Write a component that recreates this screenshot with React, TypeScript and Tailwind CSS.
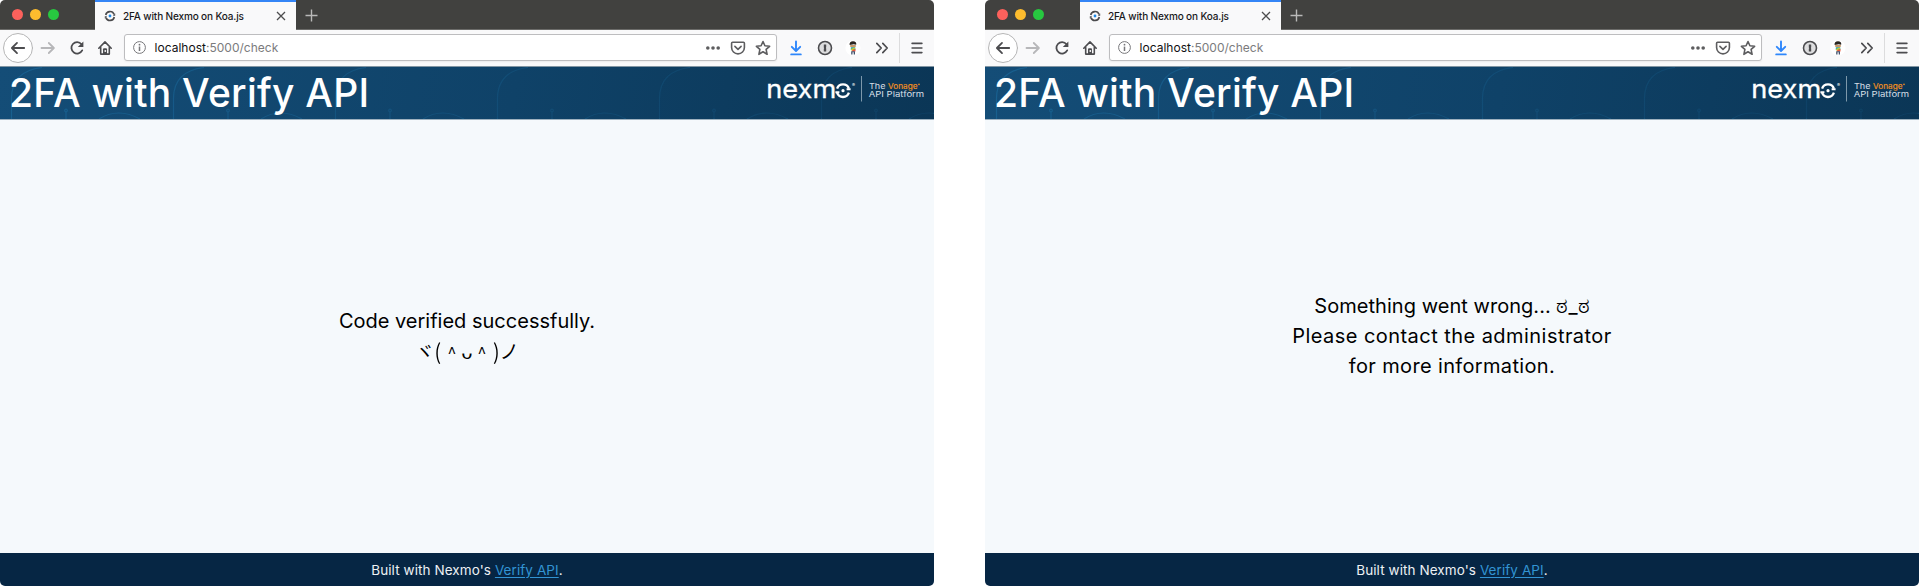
import React from "react";

const ui = "font-['Inter','Liberation_Sans',sans-serif]";

function SwirlIcon() {
  return (
    <svg className="block h-3 w-3" viewBox="0 0 12 12" fill="none" stroke="#4a4a4c" strokeWidth="1.6">
      <path d="M1.7 5A4.4 4.4 0 0 1 10.1 4.4" />
      <path d="M10.3 7A4.4 4.4 0 0 1 1.9 7.6" />
      <path d="M11.2 3.6V5.8H8.8ZM.8 8.4V6.2H3.2Z" fill="#4a4a4c" stroke="none" />
      <circle cx="6" cy="6" r="1.4" fill="#1e88e5" stroke="none" />
    </svg>
  );
}

function TitleBar() {
  return (
    <div className="flex h-[30px] shrink-0 border-b border-[#6b6b69] bg-[#41413f]">
      <div className="flex w-[95px] shrink-0 items-center gap-[7px] pl-[11.5px]">
        <span className="h-[11px] w-[11px] rounded-full bg-[#fc615c]" />
        <span className="h-[11px] w-[11px] rounded-full bg-[#fdbc2e]" />
        <span className="h-[11px] w-[11px] rounded-full bg-[#27c840]" />
      </div>
      <div className="flex h-[30px] w-[201px] shrink-0 items-center border-t-2 border-[#3485f6] bg-[#f9f9fa] pl-[9px]">
        <SwirlIcon />
        <span className={`${ui} ml-[7px] w-[153px] whitespace-nowrap text-[10px] font-medium leading-[14px] tracking-[-0.14px] text-[#18181a]`}>
          2FA with Nexmo on Koa.js
        </span>
        <svg className="block h-[10px] w-[10px]" viewBox="0 0 10 10" stroke="#4c4c4e" strokeWidth="1.3">
          <path d="M1 1 9 9M9 1 1 9" />
        </svg>
      </div>
      <svg className="ml-[9px] mt-[8.5px] block h-[13px] w-[13px]" viewBox="0 0 13 13" stroke="#b9b9b8" strokeWidth="1.4">
        <path d="M6.5 .5V12.5M.5 6.5H12.5" />
      </svg>
    </div>
  );
}

function Toolbar() {
  return (
    <div className="flex h-[37px] shrink-0 items-center border-b border-[#8195a3] bg-[#f9f9fa] pb-px pl-[3px]">
      <svg className="block h-[30px] w-[30px]" viewBox="0 0 30 30" fill="none" stroke="#4c4c4f" strokeWidth="1.8" strokeLinecap="round" strokeLinejoin="round">
        <circle cx="15" cy="15" r="14.5" fill="#fff" stroke="#b5b5b6" strokeWidth="1" />
        <path d="M21.2 15H9M14 9.9 8.9 15 14 20.1" />
      </svg>
      <svg className="ml-[7px] block h-4 w-4" viewBox="0 0 16 16" fill="none" stroke="#b7b7b9" strokeWidth="1.8" strokeLinecap="round" strokeLinejoin="round">
        <path d="M1.5 8H13.7M8.8 3 13.9 8 8.8 13" />
      </svg>
      <svg className="ml-[13px] block h-4 w-4" viewBox="0 0 16 16" fill="none" stroke="#4c4c4f" strokeWidth="1.8" strokeLinecap="round">
        <path d="M12.5 4.2A5.7 5.7 0 1 0 13.2 10.4" />
        <path d="M14.4 1.4V7H8.8Z" fill="#4c4c4f" stroke="none" />
      </svg>
      <svg className="ml-[12px] block h-4 w-4" viewBox="0 0 16 16" fill="none" stroke="#4c4c4f" strokeWidth="1.6" strokeLinecap="round" strokeLinejoin="round">
        <path d="M1.8 8.2 8 1.9 14.2 8.2M3.7 7.6V14.1H12.3V7.6" />
        <path d="M6 14V9.3Q6 8.2 7 8.2H9Q10 8.2 10 9.3V14Z" fill="#4c4c4f" stroke="none" />
        <circle cx="8.3" cy="11" r=".9" fill="#f9f9fa" stroke="none" />
      </svg>
      <div className="ml-[11px] flex h-[27px] w-[653px] shrink-0 items-center rounded-[3px] border border-[#bdbdbf] bg-white pl-[8px] shadow-[0_1px_2px_rgba(0,0,0,0.06)]">
        <svg className="block h-[13px] w-[13px]" viewBox="0 0 13 13" fill="none" stroke="#77777a" strokeWidth="1">
          <circle cx="6.5" cy="6.5" r="5.9" />
          <path d="M6.5 5.6V10" strokeWidth="1.5" />
          <circle cx="6.5" cy="3.7" r=".9" fill="#77777a" stroke="none" />
        </svg>
        <span className={`${ui} ml-[8.5px] w-[550px] whitespace-nowrap pt-px text-[12px] leading-[16px] tracking-[0.02px] text-[#7b7b7d]`}>
          <span className="text-[#111113]">localhost</span>:5000/check
        </span>
        <svg className="block h-1 w-4" viewBox="0 0 16 4" fill="#5d5d5f">
          <circle cx="2.8" cy="2" r="1.8" />
          <circle cx="8" cy="2" r="1.8" />
          <circle cx="13.2" cy="2" r="1.8" />
        </svg>
        <svg className="ml-[9px] block h-4 w-4" viewBox="0 0 16 16" fill="none" stroke="#5d5d5f" strokeWidth="1.6" strokeLinecap="round" strokeLinejoin="round">
          <path d="M2.6 2.2H13.4Q14.4 2.2 14.4 3.2V7.5A6.4 6.4 0 0 1 1.6 7.5V3.2Q1.6 2.2 2.6 2.2Z" />
          <path d="M4.9 6.4 8 9.3 11.1 6.4" />
        </svg>
        <svg className="ml-[9px] block h-4 w-4" viewBox="0 0 16 16" fill="none" stroke="#5d5d5f" strokeWidth="1.6" strokeLinejoin="round">
          <path d="M8 1.5 9.9 5.8 14.6 6.3 11.1 9.4 12.1 14.3 8 11.8 3.9 14.3 4.9 9.4 1.4 6.3 6.1 5.8Z" />
        </svg>
      </div>
      <svg className="ml-[10.5px] block h-4 w-4" viewBox="0 0 16 16" fill="none" stroke="#2f87fb" strokeWidth="1.9" strokeLinecap="round" strokeLinejoin="round">
        <path d="M8 1.4V10.6M3.8 6.8 8 11 12.2 6.8M3.2 14.4H12.8" />
      </svg>
      <svg className="ml-[13px] block h-4 w-4" viewBox="0 0 16 16" fill="none">
        <circle cx="8" cy="8" r="6.5" fill="#dededf" stroke="#4c4c4f" strokeWidth="1.6" />
        <path d="M6.8 4.5H9.2V7.2L8.8 7.9 9.2 8.5V11.5H6.8V8.8L7.2 8.2 6.8 7.5Z" fill="#4c4c4f" />
      </svg>
      <svg className="ml-[12px] block h-4 w-4" viewBox="0 0 16 16">
        <circle cx="8" cy="8" r="7.6" fill="#fff" />
        <path d="M5.2 5H10.8V6.8Q8 8.5 5.2 6.8Z" fill="#c99869" />
        <path d="M4.6 5Q4.2 1.4 8 1.3 11.8 1.4 11.2 4.8L8.8 4.2Z" fill="#2a241f" />
        <path d="M5.8 7.3H10.3V10H5.8Z" fill="#31a9b5" />
        <path d="M5.8 9.2 9 7.5 10.5 8.5 6.8 11Z" fill="#c7cf31" />
        <path d="M7.2 10.1 10.5 9V11.5H7.2Z" fill="#e9573c" />
        <path d="M6.2 11.2H10V14.4H8.7V12.2H7.5V14.4H6.2Z" fill="#41506b" />
      </svg>
      <svg className="ml-[13.5px] block h-4 w-4" viewBox="0 0 16 16" fill="none" stroke="#4c4c4f" strokeWidth="1.7" strokeLinecap="round" strokeLinejoin="round">
        <path d="M2.8 3.4 7.2 8 2.8 12.6M8.8 3.4 13.2 8 8.8 12.6" />
      </svg>
      <span className="ml-[9px] h-[30px] w-px bg-[#dcdcdd]" />
      <svg className="ml-[9px] block h-4 w-4" viewBox="0 0 16 16" stroke="#4c4c4f" strokeWidth="1.6" strokeLinecap="round">
        <path d="M3.1 3.4H12.9M3.1 8H12.9M3.1 12.6H12.9" />
      </svg>
    </div>
  );
}

const arches = [0, 162, 324, 486, 648, 810];

function HeaderPattern() {
  return (
    <svg className="absolute inset-0 h-full w-full" viewBox="0 0 934 52" fill="none" stroke="#1d73a8" strokeWidth="1.2">
      <defs>
        <linearGradient id="fade" x1="0" x2="1">
          <stop offset="0" stopColor="#fff" stopOpacity=".5" />
          <stop offset=".55" stopColor="#fff" stopOpacity=".22" />
          <stop offset="1" stopColor="#fff" stopOpacity=".14" />
        </linearGradient>
        <mask id="fadeMask">
          <rect width="934" height="52" fill="url(#fade)" />
        </mask>
      </defs>
      <g mask="url(#fadeMask)">
        {arches.map((x) => (
          <g key={x} transform={`translate(${x} 0)`}>
            <path d="M11.5 52V31Q12 4 42 .5" />
            <path d="M66 45V52" />
            <circle cx="66" cy="43.5" r="1.3" />
            <path d="M99 52Q118 40 140 52" />
          </g>
        ))}
      </g>
    </svg>
  );
}

function NexmoLogo() {
  return (
    <svg className="relative mt-[7px] block h-[32px] w-[170px]" viewBox="0 0 170 32">
      <g fill="#fff" fontFamily="Inter, sans-serif">
        <text x="2.3" y="23.6" fontSize="25.5" textLength="70" lengthAdjust="spacingAndGlyphs" stroke="#fff" strokeWidth=".3">nexm</text>
        <text x="88" y="13" fontSize="4.5">®</text>
      </g>
      <g fill="none" stroke="#fff" strokeWidth="2.3">
        <path d="M73.1 14.7A6.2 6.2 0 0 1 84.9 14.7" />
        <path d="M84.9 18.7A6.2 6.2 0 0 1 73.1 18.7" />
      </g>
      <path d="M86.6 14.2V16.2H82.6V14.2ZM71.4 19.2V17.2H75.4V19.2Z" fill="#fff" />
      <circle cx="79" cy="16.7" r="1.6" fill="#fff" />
      <path d="M97.5 2V27.5" stroke="#7d98ab" strokeWidth="1" />
      <g fontFamily="Inter, sans-serif" fontSize="7.8">
        <text x="105" y="14.8" fill="#d5dfe6" textLength="16.5" lengthAdjust="spacingAndGlyphs">The</text>
        <text x="124" y="14.8" fill="#f29020" textLength="29.5" lengthAdjust="spacingAndGlyphs" stroke="#f29020" strokeWidth=".15">Vonage</text>
        <text x="104.7" y="23" fill="#d5dfe6" textLength="55.5" lengthAdjust="spacingAndGlyphs">API Platform</text>
      </g>
      <circle cx="155" cy="10.4" r=".8" fill="#f29020" />
    </svg>
  );
}

function BrowserWindow({ children }: { children: React.ReactNode }) {
  return (
    <section className="flex h-[586px] w-[934px] shrink-0 flex-col overflow-hidden rounded-[5px]">
      <TitleBar />
      <Toolbar />
      <header className="relative flex h-[52px] shrink-0 justify-between bg-[linear-gradient(100deg,#144d77,#0f4268_55%,#0b3656)] pl-[9px]">
        <HeaderPattern />
        <h1 className={`${ui} relative whitespace-nowrap text-[39px] font-[450] leading-[52px] tracking-[0.25px] text-white`}>
          2FA with Verify API
        </h1>
        <NexmoLogo />
      </header>
      <main className={`${ui} flex flex-1 flex-col items-center justify-center border-t border-[#9eb1bf] bg-[#f5f9fc] pb-px text-[20px] leading-[30px] text-black`}>
        {children}
      </main>
      <footer className={`${ui} h-[33px] shrink-0 bg-[#062644] text-center text-[13.5px] leading-[34px] tracking-[0.08px] text-[#edf1f4]`}>
        Built with Nexmo's <span className="text-[#3294d3] underline underline-offset-2">Verify API</span>.
      </footer>
    </section>
  );
}

export default function App() {
  return (
    <div className="flex h-[586px] w-[1920px] gap-[51px] overflow-hidden bg-white">
      <BrowserWindow>
        <p>Code verified successfully.</p>
        <p className="flex h-[30px] items-baseline whitespace-nowrap font-['Noto_Sans_CJK_JP',sans-serif] text-[19.5px]">
          <span>ヾ</span>
          <span className="w-[10px] scale-y-110">(</span>
          <span className="w-[15px] text-center text-[16px]">^</span>
          <span className="w-[15px] text-center">ᴗ</span>
          <span className="w-[15px] text-center text-[16px]">^</span>
          <span className="w-[10px] scale-y-110 text-right">)</span>
          <span>ノ</span>
        </p>
      </BrowserWindow>
      <BrowserWindow>
        <p className="tracking-[0.04px]">
          Something went wrong... <span className="text-[22px] leading-none">ಠ</span>_<span className="text-[22px] leading-none">ಠ</span>
        </p>
        <p className="tracking-[0.45px]">Please contact the administrator</p>
        <p className="tracking-[0.35px]">for more information.</p>
      </BrowserWindow>
    </div>
  );
}
